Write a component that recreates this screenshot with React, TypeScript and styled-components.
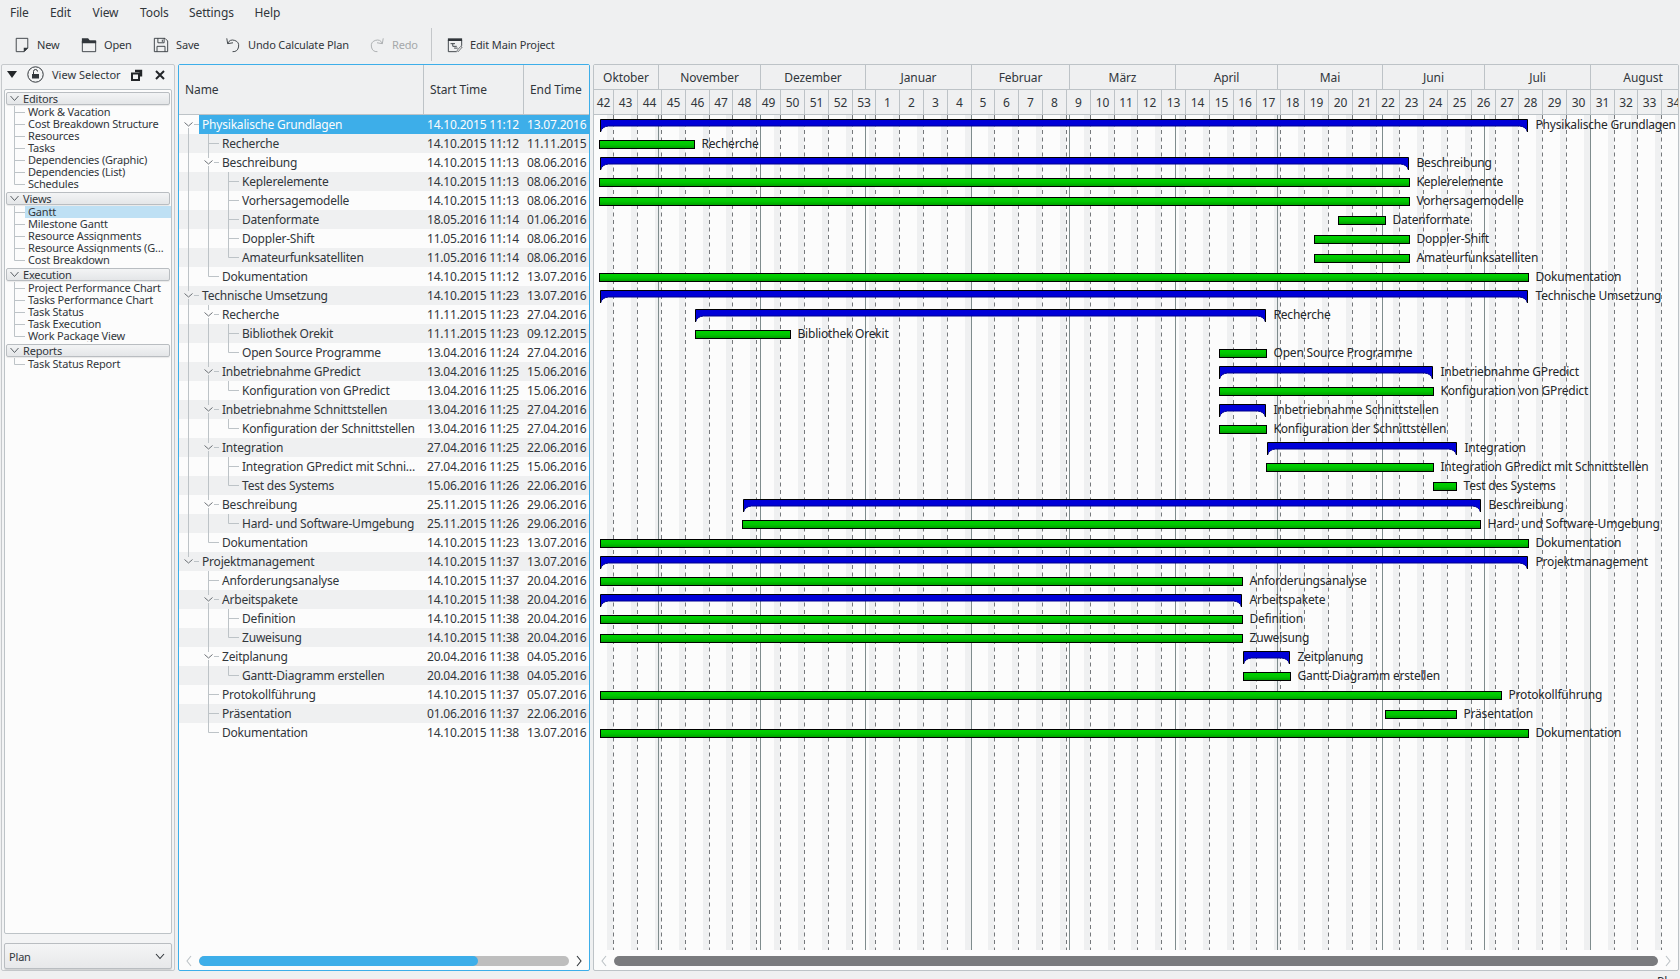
import React from "react";
import styled, { createGlobalStyle } from "styled-components";

const FONT = `"Noto Sans", "Open Sans", sans-serif`;
const TEXT = "#31363b";
const LINE = "#bdc3c7";

const Global = createGlobalStyle`
  html, body { margin: 0; padding: 0; background: #eff0f1; }
  body { font-family: ${FONT}; font-size: 12px; color: ${TEXT}; letter-spacing: -0.1px; }
  * { box-sizing: border-box; }
`;

const Page = styled.div`
  width: 1680px; height: 979px; display: flex; flex-direction: column; overflow: hidden; background: #eff0f1;
`;
const MenuBar = styled.nav`
  height: 25px; display: flex; align-items: center; padding-left: 10px; flex: none;
`;
const MenuItem = styled.span<{ $w: number }>`
  width: ${(p) => p.$w}px; line-height: 25px;
`;
const ToolBar = styled.div`
  height: 39px; flex: none; display: flex; align-items: center; padding-left: 14px; font-size: 11px; letter-spacing: -0.15px;
`;
const ToolButton = styled.div<{ $w: number; $off?: boolean }>`
  width: ${(p) => p.$w}px; display: flex; align-items: center; gap: 7px; color: ${(p) => (p.$off ? "#a5a8aa" : TEXT)};
`;
const ToolIcon = styled.svg`
  width: 16px; height: 16px; flex: none; display: block;
`;
const ToolSep = styled.div`
  width: 1px; height: 33px; background: #c4c7ca; margin: 0 15px 0 0;
`;
const Main = styled.div`
  height: 907px; flex: none; display: flex; padding: 0 1px;
`;
const LeftPanel = styled.aside`
  width: 174px; flex: none; margin-right: 3px; border: 1px solid #c6c9cc; border-radius: 2px; background: #f3f4f5;
  display: flex; flex-direction: column; font-size: 11px; letter-spacing: -0.18px;
`;
const DockHead = styled.div`
  height: 24px; flex: none; display: flex; align-items: center; padding: 0 0 6px 5px; position: relative; letter-spacing: 0;
`;
const DockTitle = styled.span`
  margin-left: 8px;
`;
const DockTriangle = styled.svg`
  flex: none; margin-right: 10px;
`;
const DockLock = styled.svg`
  flex: none;
`;
const DockFloat = styled.svg`
  position: absolute; left: 129px; top: 4px;
`;
const DockClose = styled.svg`
  position: absolute; left: 153px; top: 5px;
`;
const TreeBox = styled.div`
  height: 845px; flex: none; margin: 0 2px; border: 1px solid ${LINE}; border-radius: 2px; background: #fcfcfc; overflow: hidden;
`;
const GroupHead = styled.div`
  height: 13px; margin: 2px 1px 1px; border: 1px solid #b9bdc1; border-radius: 2px; background: linear-gradient(#f3f4f5, #e4e6e8);
  display: flex; align-items: center; line-height: 10px; box-shadow: 0 1px 1px rgba(0,0,0,.08);
`;
const GroupChevron = styled.svg`
  flex: none; margin-left: 1px;
`;
const GroupText = styled.span`
  margin-left: 1px;
`;
const TreeRow = styled.div`
  height: 12px; display: flex; align-items: stretch; line-height: 12px;
`;
const TreeLines = styled.svg`
  flex: none; display: block;
`;
const TreeLabel = styled.div<{ $on?: boolean }>`
  flex: 1; min-width: 0; padding-left: 3px; white-space: nowrap; overflow: hidden; background: ${(p) => (p.$on ? "#bee0f4" : "transparent")};
`;
const Combo = styled.div`
  height: 26px; flex: none; margin: 9px 2px 0; border: 1px solid #b9bdc1; border-radius: 2px; background: linear-gradient(#f4f5f6, #e7e8ea);
  display: flex; align-items: center; justify-content: space-between; padding: 0 6px 0 4px; box-shadow: 0 1px 1px rgba(0,0,0,.15);
`;
const Table = styled.section`
  width: 412px; flex: none; margin-right: 3px; border: 1px solid #3daee9; border-radius: 2px; background: #fcfcfc;
  display: flex; flex-direction: column;
`;
const TableHead = styled.div`
  height: 50px; flex: none; display: grid; grid-template-columns: 245px 100px 65px; background: #eff0f1; border-bottom: 1px solid ${LINE};
`;
const HeadCell = styled.div<{ $last?: boolean }>`
  display: flex; align-items: center; padding-left: 6px; border-right: ${(p) => (p.$last ? "none" : `1px solid ${LINE}`)}; font-size: 12px;
`;
const TableBody = styled.div`
  flex: 1; min-height: 0; overflow: hidden;
`;
const Row = styled.div<{ $alt: boolean }>`
  height: 19px; display: grid; grid-template-columns: 245px 100px 65px; line-height: 19px; background: ${(p) => (p.$alt ? "#eff0f1" : "#fcfcfc")};
`;
const NameCell = styled.div`
  display: flex; min-width: 0;
`;
const GutterSvg = styled.svg`
  flex: none; display: block;
`;
const NameText = styled.div<{ $on: boolean }>`
  flex: 1; min-width: 0; padding: 0 5px 0 3px; white-space: nowrap; overflow: hidden; text-overflow: ellipsis; letter-spacing: -0.2px;
  background: ${(p) => (p.$on ? "#3daee9" : "transparent")}; color: ${(p) => (p.$on ? "#fcfcfc" : TEXT)};
`;
const DateCell = styled.div<{ $on: boolean }>`
  padding-left: 3px; white-space: nowrap; overflow: hidden; letter-spacing: -0.2px;
  background: ${(p) => (p.$on ? "#3daee9" : "transparent")}; color: ${(p) => (p.$on ? "#fcfcfc" : TEXT)};
`;
const ScrollRow = styled.div`
  height: 20px; flex: none; display: flex; align-items: center; gap: 6px; padding: 2px 6px 0;
`;
const Track = styled.div`
  flex: 1; height: 10px; border-radius: 5px; background: #bebebe; overflow: hidden;
`;
const Thumb = styled.div<{ $pct: number; $color: string }>`
  height: 100%; width: ${(p) => p.$pct}%; border-radius: 5px; background: ${(p) => p.$color};
`;
const Arrow = styled.svg`
  width: 8px; height: 12px; flex: none; display: block;
`;
const Chart = styled.section`
  flex: 1; min-width: 0; border: 1px solid ${LINE}; border-radius: 2px; background: #fcfcfc; display: flex; flex-direction: column; overflow: hidden;
`;
const HeadBand = styled.div<{ $h: number }>`
  height: ${(p) => p.$h}px; flex: none; display: flex; background: #eff0f1; border-bottom: 1px solid ${LINE}; overflow: hidden;
`;
const BandCell = styled.div`
  flex: none; display: flex; align-items: center; justify-content: center; border-right: 1px solid ${LINE}; white-space: nowrap;
`;
const ChartBody = styled.div`
  flex: 1; min-height: 0; overflow: hidden;
`;
const ChartSvg = styled.svg`
  display: block; font-family: ${FONT}; font-size: 12px; letter-spacing: -0.2px;
`;
const Footer = styled.div`
  height: 8px; flex: none; position: relative; overflow: hidden;
`;
const FooterText = styled.span`
  position: absolute; left: 1657px; top: 5px; line-height: 12px;
`;

type Task = { n: string; l: number; s: string; st: string; e: string; sum?: boolean };
const T = (n: string, l: number, s: string, st: string, e: string, sum?: boolean): Task => ({ n, l, s, st, e, sum });
const tasks: Task[] = [
  T("Physikalische Grundlagen", 0, "14.10.2015", "11:12", "13.07.2016", true),
  T("Recherche", 1, "14.10.2015", "11:12", "11.11.2015"),
  T("Beschreibung", 1, "14.10.2015", "11:13", "08.06.2016", true),
  T("Keplerelemente", 2, "14.10.2015", "11:13", "08.06.2016"),
  T("Vorhersagemodelle", 2, "14.10.2015", "11:13", "08.06.2016"),
  T("Datenformate", 2, "18.05.2016", "11:14", "01.06.2016"),
  T("Doppler-Shift", 2, "11.05.2016", "11:14", "08.06.2016"),
  T("Amateurfunksatelliten", 2, "11.05.2016", "11:14", "08.06.2016"),
  T("Dokumentation", 1, "14.10.2015", "11:12", "13.07.2016"),
  T("Technische Umsetzung", 0, "14.10.2015", "11:23", "13.07.2016", true),
  T("Recherche", 1, "11.11.2015", "11:23", "27.04.2016", true),
  T("Bibliothek Orekit", 2, "11.11.2015", "11:23", "09.12.2015"),
  T("Open Source Programme", 2, "13.04.2016", "11:24", "27.04.2016"),
  T("Inbetriebnahme GPredict", 1, "13.04.2016", "11:25", "15.06.2016", true),
  T("Konfiguration von GPredict", 2, "13.04.2016", "11:25", "15.06.2016"),
  T("Inbetriebnahme Schnittstellen", 1, "13.04.2016", "11:25", "27.04.2016", true),
  T("Konfiguration der Schnittstellen", 2, "13.04.2016", "11:25", "27.04.2016"),
  T("Integration", 1, "27.04.2016", "11:25", "22.06.2016", true),
  T("Integration GPredict mit Schnittstellen", 2, "27.04.2016", "11:25", "15.06.2016"),
  T("Test des Systems", 2, "15.06.2016", "11:26", "22.06.2016"),
  T("Beschreibung", 1, "25.11.2015", "11:26", "29.06.2016", true),
  T("Hard- und Software-Umgebung", 2, "25.11.2015", "11:26", "29.06.2016"),
  T("Dokumentation", 1, "14.10.2015", "11:23", "13.07.2016"),
  T("Projektmanagement", 0, "14.10.2015", "11:37", "13.07.2016", true),
  T("Anforderungsanalyse", 1, "14.10.2015", "11:37", "20.04.2016"),
  T("Arbeitspakete", 1, "14.10.2015", "11:38", "20.04.2016", true),
  T("Definition", 2, "14.10.2015", "11:38", "20.04.2016"),
  T("Zuweisung", 2, "14.10.2015", "11:38", "20.04.2016"),
  T("Zeitplanung", 1, "20.04.2016", "11:38", "04.05.2016", true),
  T("Gantt-Diagramm erstellen", 2, "20.04.2016", "11:38", "04.05.2016"),
  T("Protokollführung", 1, "14.10.2015", "11:37", "05.07.2016"),
  T("Präsentation", 1, "01.06.2016", "11:37", "22.06.2016"),
  T("Dokumentation", 1, "14.10.2015", "11:38", "13.07.2016"),
];

const groups: { title: string; items: string[]; on?: string }[] = [
  { title: "Editors", items: ["Work & Vacation", "Cost Breakdown Structure", "Resources", "Tasks", "Dependencies (Graphic)", "Dependencies (List)", "Schedules"] },
  { title: "Views", on: "Gantt", items: ["Gantt", "Milestone Gantt", "Resource Assignments", "Resource Assignments (G…", "Cost Breakdown"] },
  { title: "Execution", items: ["Project Performance Chart", "Tasks Performance Chart", "Task Status", "Task Execution", "Work Package View"] },
  { title: "Reports", items: ["Task Status Report"] },
];

const DAY = 3.4023;
const ORIGIN = Date.UTC(2015, 9, 19);
const CHART_LEFT = 594;
const dayX = (d: number) => 613.4 + d * DAY;
const daysOf = (y: number, m: number, d: number) => (Date.UTC(y, m, d) - ORIGIN) / 86400000;
const parse = (s: string) => {
  const [d, m, y] = s.split(".").map(Number);
  return daysOf(y, m - 1, d);
};
const timeFrac = (s: string) => {
  const [h, m] = s.split(":").map(Number);
  return (h * 60 + m) / 1440;
};

const months: [string, number, number][] = [
  ["Oktober", 2015, 9], ["November", 2015, 10], ["Dezember", 2015, 11], ["Januar", 2016, 0], ["Februar", 2016, 1],
  ["März", 2016, 2], ["April", 2016, 3], ["Mai", 2016, 4], ["Juni", 2016, 5], ["Juli", 2016, 6], ["August", 2016, 7],
];
const monthEdges = [
  ...months.slice(1).map(([, y, m]) => Math.round(dayX(daysOf(y, m, 1)))),
  Math.round(dayX(daysOf(2016, 8, 1))),
];
const monthCellEdges = [594, ...monthEdges.map((e) => e + 1)];
const weekLabels = [42, 43, 44, 45, 46, 47, 48, 49, 50, 51, 52, 53, ...Array.from({ length: 34 }, (_, i) => i + 1)];
const weekEdges = [594, ...weekLabels.map((_, i) => Math.round(613.4 + i * 7 * DAY) + 1)];

function Chevron({ x, y, size = 4 }: { x: number; y: number; size?: number }) {
  return <path d={`M${x - size} ${y - size / 2}L${x} ${y + size / 2 - 0.5}L${x + size} ${y - size / 2}`} fill="none" stroke="#5a6065" strokeWidth="0.9" />;
}

function Gutter({ index }: { index: number }) {
  const t = tasks[index];
  const hasNext = (lvl: number, from: number) => {
    for (let i = from + 1; i < tasks.length; i++) {
      if (tasks[i].l < lvl) return false;
      if (tasks[i].l === lvl) return true;
    }
    return false;
  };
  const parts: React.ReactNode[] = [];
  for (let a = 0; a < t.l; a++) {
    if (hasNext(a, index)) {
      const x = 9.5 + a * 20;
      parts.push(<line key={`v${a}`} x1={x} x2={x} y1={0} y2={19} stroke={LINE} />);
    }
  }
  const x = 9.5 + t.l * 20;
  const next = hasNext(t.l, index);
  if (t.sum) {
    if (index > 0) parts.push(<line key="up" x1={x} x2={x} y1={0} y2={5} stroke={LINE} />);
    if (next) parts.push(<line key="down" x1={x} x2={x} y1={13} y2={19} stroke={LINE} />);
    parts.push(<line key="h" x1={x + 5.5} x2={x + 10.5} y1={9.5} y2={9.5} stroke={LINE} />);
    parts.push(<Chevron key="c" x={x} y={9.5} />);
  } else {
    parts.push(<line key="u" x1={x} x2={x} y1={0} y2={next ? 19 : 9.5} stroke={LINE} />);
    parts.push(<line key="h" x1={x} x2={x + 10.5} y1={9.5} y2={9.5} stroke={LINE} />);
  }
  return (
    <GutterSvg width={20 + t.l * 20} height={19}>
      {parts}
    </GutterSvg>
  );
}

function GanttDrawing() {
  const W = 1084;
  const H = 836;
  const stripes: React.ReactNode[] = [];
  const grid: React.ReactNode[] = [];
  for (let i = 0; i < 45; i++) {
    const x = Math.round(613.4 + i * 7 * DAY) - CHART_LEFT;
    stripes.push(<rect key={i} x={x - 6} y={0} width={6} height={H} fill="#eff0f1" />);
    grid.push(<line key={i} x1={x + 0.5} x2={x + 0.5} y1={0} y2={H} stroke="#76797c" strokeDasharray="4 3.5" />);
  }
  const mLines = monthEdges.slice(0, -1).map((e, i) => (
    <line key={i} x1={e - CHART_LEFT + 0.5} x2={e - CHART_LEFT + 0.5} y1={0} y2={H} stroke="#7f8c8d" />
  ));
  const bars = tasks.map((t, i) => {
    const top = i * 19;
    const sd = parse(t.s) + timeFrac(t.st);
    const ed = parse(t.e) + 0.7;
    if (t.sum) {
      const x1 = Math.round(dayX(sd) + 2 - CHART_LEFT) + 0.5;
      const x2 = Math.round(dayX(ed) + 0.6 - CHART_LEFT) - 0.5;
      const y = top + 4.5;
      const arch = `V${y + 12.5}Q${x2 - 1.5} ${y + 7} ${x2 - 8} ${y + 6.5}H${x1 + 8}Q${x1 + 1.5} ${y + 7} ${x1} ${y + 12.5}`;
      return (
        <g key={i}>
          <path d={`M${x1} ${y}H${x2}${arch}Z`} fill="#0000d8" />
          <path d={`M${x2} ${y + 12.5}Q${x2 - 1.5} ${y + 7} ${x2 - 8} ${y + 6.5}H${x1 + 8}Q${x1 + 1.5} ${y + 7} ${x1} ${y + 12.5}`} fill="none" stroke="#00008c" strokeWidth="1" />
          <path d={`M${x1} ${y + 12.5}V${y}H${x2}V${y + 12.5}`} fill="none" stroke="#000" strokeWidth="1" />
          <text x={x2 + 8} y={top + 14} fill="#232629">{t.n}</text>
        </g>
      );
    }
    const x1 = Math.round(dayX(sd) + 1.5 - CHART_LEFT) + 0.5;
    const x2 = Math.round(dayX(ed) + 1.3 - CHART_LEFT) - 0.5;
    return (
      <g key={i}>
        <rect x={x1} y={top + 6.5} width={x2 - x1} height={8} fill="url(#greenBar)" stroke="#000" strokeWidth="1" />
        <text x={x2 + 7} y={top + 14} fill="#232629">{t.n}</text>
      </g>
    );
  });
  return (
    <ChartSvg width={W} height={H} viewBox={`0 0 ${W} ${H}`}>
      <defs>
        <linearGradient id="greenBar" x1="0" y1="0" x2="0" y2="1">
          <stop offset="0" stopColor="#00d400" />
          <stop offset="0.55" stopColor="#00c400" />
          <stop offset="1" stopColor="#009800" />
        </linearGradient>
      </defs>
      {stripes}
      {grid}
      {mLines}
      {bars}
    </ChartSvg>
  );
}

const menuItems: [string, number][] = [["File", 40], ["Edit", 42.6], ["View", 47.4], ["Tools", 49], ["Settings", 65.5], ["Help", 40]];

const ScrollArrow = ({ dir, dark }: { dir: "l" | "r"; dark?: boolean }) => (
  <Arrow viewBox="0 0 8 12">
    <path d={dir === "l" ? "M6 1L2 6L6 11" : "M2 1L6 6L2 11"} fill="none" stroke={dark ? "#31363b" : "#bdc3c7"} strokeWidth="1.1" />
  </Arrow>
);

export default function App() {
  return (
    <Page>
      <Global />
      <MenuBar>
        {menuItems.map(([m, w]) => (
          <MenuItem key={m} $w={w}>{m}</MenuItem>
        ))}
      </MenuBar>
      <ToolBar>
        <ToolButton $w={67}>
          <ToolIcon viewBox="0 0 18 18">
            <path d="M2.5 1.5H15.5V12.5L11.5 16.5H2.5Z" fill="none" stroke="#31363b" />
            <path d="M11 17V12H16Z" fill="#31363b" />
          </ToolIcon>
          <span>New</span>
        </ToolButton>
        <ToolButton $w={72}>
          <ToolIcon viewBox="0 0 18 18">
            <path d="M1.5 4.5H16.5V16.5H1.5Z" fill="none" stroke="#31363b" />
            <path d="M1 1.5H8L10 4H17V7H1Z" fill="#31363b" />
          </ToolIcon>
          <span>Open</span>
        </ToolButton>
        <ToolButton $w={72}>
          <ToolIcon viewBox="0 0 18 18">
            <path d="M1.5 1.5H13.5L16.5 4.5V16.5H1.5Z" fill="none" stroke="#31363b" />
            <path d="M5.5 1.5V6.5H12.5V1.5M10.5 3V5.5M4.5 16.5V10.5H13.5V16.5" fill="none" stroke="#31363b" />
          </ToolIcon>
          <span>Save</span>
        </ToolButton>
        <ToolButton $w={144}>
          <ToolIcon viewBox="0 0 18 18">
            <path d="M3 7.2A6.5 6.5 0 1 1 8.5 16.5" fill="none" stroke="#31363b" />
            <path d="M2 1.5L3 7.5L9 6.5" fill="none" stroke="#31363b" />
          </ToolIcon>
          <span>Undo Calculate Plan</span>
        </ToolButton>
        <ToolButton $w={62} $off>
          <ToolIcon viewBox="0 0 18 18">
            <path d="M15 7.2A6.5 6.5 0 1 0 9.5 16.5" fill="none" stroke="#a5a8aa" />
            <path d="M16 1.5L15 7.5L9 6.5" fill="none" stroke="#a5a8aa" />
          </ToolIcon>
          <span>Redo</span>
        </ToolButton>
        <ToolSep />
        <ToolButton $w={140}>
          <ToolIcon viewBox="0 0 18 18">
            <path d="M1.5 3.5H16.5V10M11 16.5H1.5V3.5" fill="none" stroke="#31363b" />
            <path d="M1 1.5H17V4.5H1Z" fill="#31363b" />
            <path d="M4 7.5H9M6.5 7.5V10.5H11M8 12.5H12" fill="none" stroke="#31363b" />
            <path d="M12.5 16.5L17 11.5L15.5 10.5L11.5 15Z" fill="#fff" stroke="#31363b" strokeWidth="0.8" />
          </ToolIcon>
          <span>Edit Main Project</span>
        </ToolButton>
      </ToolBar>
      <Main>
        <LeftPanel>
          <DockHead>
            <DockTriangle width="10" height="7" viewBox="0 0 10 7">
              <path d="M0 0H10L5 7Z" fill="#232629" />
            </DockTriangle>
            <DockLock width="17" height="17" viewBox="0 0 17 17">
              <circle cx="8.5" cy="8.5" r="7.7" fill="none" stroke="#31363b" strokeWidth="1" />
              <path d="M6.5 8V5.5A2 2 0 0 1 10.5 5.5" fill="none" stroke="#31363b" />
              <path d="M5 8H12V12.5H5Z" fill="#31363b" />
            </DockLock>
            <DockTitle>View Selector</DockTitle>
            <DockFloat width="12" height="12" viewBox="0 0 12 12">
              <path d="M4 0.8H11.2V7.5H8.5V3.2H4Z" fill="#232629" />
              <path d="M1 4.5H8V11H1Z" fill="none" stroke="#232629" strokeWidth="2" />
            </DockFloat>
            <DockClose width="10" height="10" viewBox="0 0 10 10">
              <path d="M1 1L9 9M9 1L1 9" stroke="#232629" strokeWidth="2" />
            </DockClose>
          </DockHead>
          <TreeBox>
            {groups.map((g) => (
              <div key={g.title}>
                <GroupHead>
                  <GroupChevron width="14" height="9" viewBox="0 0 14 9">
                    <path d="M2.5 2L6.5 6.5L10.5 2" fill="none" stroke="#5a6065" />
                  </GroupChevron>
                  <GroupText>{g.title}</GroupText>
                </GroupHead>
                {g.items.map((it, i) => (
                  <TreeRow key={it}>
                    <TreeLines width="20" height="12">
                      <path d={`M9.5 0V${i === g.items.length - 1 ? 6.5 : 12}M9.5 6.5H20`} fill="none" stroke={LINE} />
                    </TreeLines>
                    <TreeLabel $on={g.on === it}>{it}</TreeLabel>
                  </TreeRow>
                ))}
              </div>
            ))}
          </TreeBox>
          <Combo>
            <span>Plan</span>
            <svg width="10" height="7" viewBox="0 0 10 7">
              <path d="M1 1L5 5.5L9 1" fill="none" stroke="#31363b" strokeWidth="1.1" />
            </svg>
          </Combo>
        </LeftPanel>
        <Table>
          <TableHead>
            <HeadCell>Name</HeadCell>
            <HeadCell>Start Time</HeadCell>
            <HeadCell $last>End Time</HeadCell>
          </TableHead>
          <TableBody>
            {tasks.map((t, i) => (
              <Row key={i} $alt={i % 2 === 1}>
                <NameCell>
                  <Gutter index={i} />
                  <NameText $on={i === 0}>{t.n}</NameText>
                </NameCell>
                <DateCell $on={i === 0}>{t.s} {t.st}</DateCell>
                <DateCell $on={i === 0}>{t.e}</DateCell>
              </Row>
            ))}
          </TableBody>
          <ScrollRow>
            <ScrollArrow dir="l" />
            <Track><Thumb $pct={75.4} $color="#3daee9" /></Track>
            <ScrollArrow dir="r" dark />
          </ScrollRow>
        </Table>
        <Chart>
          <HeadBand $h={25}>
            {months.map(([m], i) => (
              <BandCell key={m} style={{ width: monthCellEdges[i + 1] - monthCellEdges[i] }}>{m}</BandCell>
            ))}
          </HeadBand>
          <HeadBand $h={25}>
            {weekLabels.map((w, i) => (
              <BandCell key={i} style={{ width: weekEdges[i + 1] - weekEdges[i] }}>{w}</BandCell>
            ))}
          </HeadBand>
          <ChartBody><GanttDrawing /></ChartBody>
          <ScrollRow>
            <ScrollArrow dir="l" />
            <Track><Thumb $pct={100} $color="#7a7b7e" /></Track>
            <ScrollArrow dir="r" />
          </ScrollRow>
        </Chart>
      </Main>
      <Footer><FooterText>Plan</FooterText></Footer>
    </Page>
  );
}
